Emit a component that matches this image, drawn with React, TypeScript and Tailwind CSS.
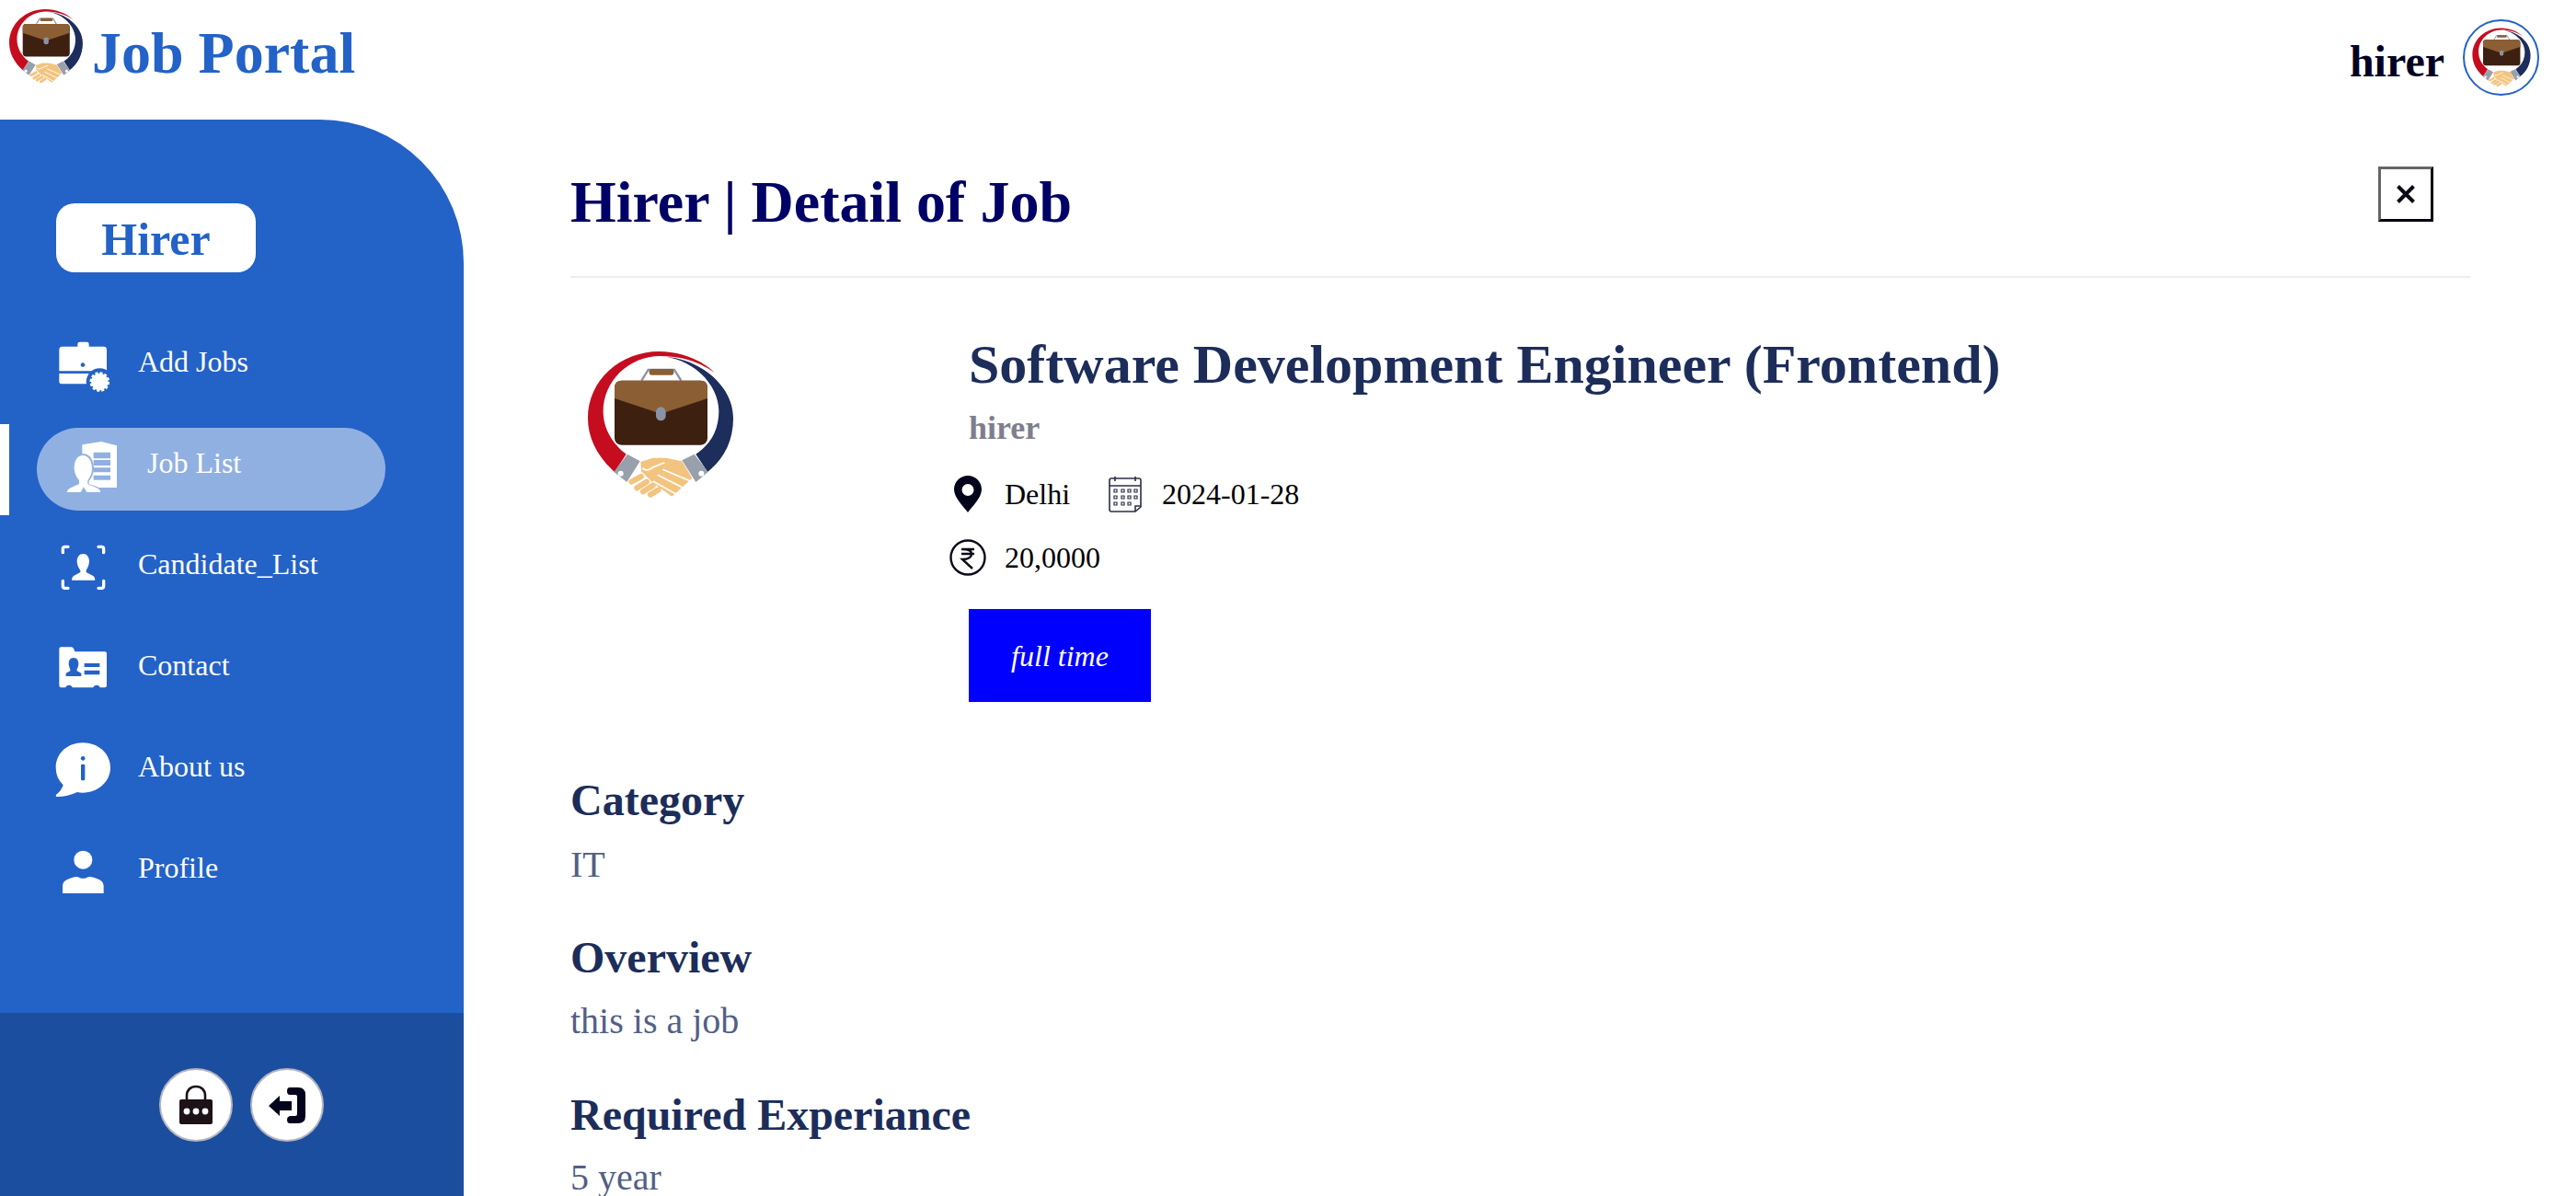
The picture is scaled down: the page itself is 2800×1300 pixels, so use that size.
import React from "react";

function Logo({ className }: { className: string }) {
  return (
    <svg viewBox="100 115 510 510" className={className}>
      <path d="M205 520C150 470 118 410 118 345C118 220 225 127 350 127C420 127 490 155 530 195C480 160 420 142 355 142C250 142 168 225 168 322C168 380 200 430 243 462Z" fill="#c60c1f" />
      <path d="M375 145C470 150 592 230 592 345C592 420 560 480 508 520L470 462C520 430 545 380 545 322C545 240 470 160 375 145Z" fill="#1d2d5c" />
      <path d="M293 222L315 187H400L422 222" fill="none" stroke="#8a93a5" strokeWidth="7" />
      <rect x="318" y="184" width="80" height="20" rx="8" fill="#8b5e34" />
      <rect x="205" y="222" width="303" height="210" rx="22" fill="#3d2010" />
      <path d="M205 280V245Q205 222 228 222H485Q508 222 508 245V280L356 330Z" fill="#8b5e34" />
      <rect x="340" y="308" width="32" height="45" rx="16" fill="#8a93a6" />
      <path d="M203 520L247 462L288 485L245 553Z" fill="#98a0ab" />
      <path d="M425 482L465 462L510 520L470 553Z" fill="#98a0ab" />
      <circle cx="225" cy="525" r="9" fill="#fff" />
      <circle cx="488" cy="525" r="9" fill="#fff" />
      <path d="M290 487L330 474H372L425 485L458 540L392 600L330 555L292 518Z" fill="#f3c47f" />
      <path d="M296 508Q310 520 330 505L368 489M362 512L458 552M345 530L438 576M330 550L412 596" fill="none" stroke="#fff" strokeWidth="5" />
      <path d="M260 552L292 535M278 572L310 552M298 584L330 564M322 594L348 578" fill="none" stroke="#f3c47f" strokeWidth="18" strokeLinecap="round" />
    </svg>
  );
}

function AddJobsIcon() {
  return (
    <svg viewBox="0 0 180 180" className="w-[60px] h-[60px] overflow-visible" fill="#fff">
      <path d="M13 30Q13 20 23 20H73V12Q73 5 80 5H103Q110 5 110 12V20H158Q168 20 168 30V100H13ZM90 73a7 7 0 1 0 .1 0Z" fillRule="evenodd" />
      <path d="M13 108H110V142H20Q13 142 13 135Z" />
      <circle cx="145" cy="135" r="44" fill="#2362c7" />
      <circle cx="145" cy="135" r="28" stroke="#fff" strokeWidth="9" strokeDasharray="9 5.6" />
    </svg>
  );
}

function JobListIcon() {
  return (
    <svg viewBox="0 0 180 180" className="w-[60px] h-[60px] overflow-visible">
      <path d="M58 10L120 0L171 13V150H58ZM95 35V55H150V35ZM95 60V78H150V60ZM95 85V100H150V85ZM95 110V125H150V110Z" fill="#fff" fillRule="evenodd" />
      <path d="M62 40C82 40 96 60 96 88C96 105 88 120 80 128V138L108 148Q122 154 124 172H2Q4 154 18 148L44 138V128Q28 112 26 88C26 60 42 40 62 40Z" fill="#91b0e2" />
      <path d="M60 45C78 45 90 62 90 88C90 103 84 118 76 126V138L104 150Q116 155 118 165H73L63 148L53 165H8Q10 155 22 150L48 138V126Q34 112 32 88C32 62 42 45 60 45Z" fill="#fff" />
    </svg>
  );
}

function CandidateIcon() {
  return (
    <svg viewBox="0 0 180 180" className="w-[60px] h-[60px] overflow-visible">
      <path d="M42 13H32Q25 13 25 20V32M141 13H151Q158 13 158 20V32M25 124V140Q25 148 32 148H42M158 124V140Q158 148 151 148H141" fill="none" stroke="#fff" strokeWidth="10" strokeLinecap="round" />
      <path d="M91 36C103 36 111 46 111 60C111 74 104 84 101 90V96L124 108Q130 112 130 122H54Q54 112 60 108L82 96V90C78 84 71 74 71 60C71 46 79 36 91 36Z" fill="#fff" />
    </svg>
  );
}

function ContactIcon() {
  return (
    <svg viewBox="0 0 180 180" className="w-[60px] h-[60px] overflow-visible">
      <path d="M13 16Q13 10 19 10H52Q60 10 64 25H162Q168 25 168 31V136Q168 142 162 142H146Q144 134 135 134Q126 134 124 142H56Q54 134 45 134Q36 134 34 142H19Q13 142 13 136Z" fill="#fff" />
      <path d="M60 45C71 45 76 54 76 64C76 72 73 78 71 82V88L85 95V105H35V95L49 88V82C47 78 44 72 44 64C44 54 49 45 60 45Z" fill="#2362c7" />
      <path d="M95 63H145V75H95ZM95 86H145V100H95Z" fill="#2362c7" />
    </svg>
  );
}

function AboutIcon() {
  return (
    <svg viewBox="0 0 180 180" className="w-[60px] h-[60px] overflow-visible">
      <path d="M90 -8C139 -8 180 26 180 73C180 120 139 155 90 155Q80 155 72 153Q40 168 8 168Q0 168 3 161Q20 150 26 130Q2 107 2 73C2 26 41 -8 90 -8Z" fill="#fff" />
      <circle cx="90.5" cy="43" r="7" fill="#2362c7" />
      <rect x="84" y="62" width="13" height="53" rx="4" fill="#2362c7" />
    </svg>
  );
}

function ProfileIcon() {
  return (
    <svg viewBox="0 0 180 180" className="w-[60px] h-[60px] overflow-visible" fill="#fff">
      <circle cx="91" cy="44" r="30" />
      <path d="M24 153V128Q24 112 48 104Q68 96 78 101Q91 108 104 101Q114 96 134 104Q158 112 158 128V153Z" />
    </svg>
  );
}

function NavRow({ icon, label }: { icon: React.ReactNode; label: string }) {
  return (
    <div className="flex items-center h-[90px] pl-[60px] gap-[30px]">
      {icon}
      <span className="text-[32px] text-white mb-[14px]">{label}</span>
    </div>
  );
}

export default function App() {
  return (
    <div className="w-[2800px] h-[1300px] overflow-hidden bg-white flex flex-col font-['Liberation_Serif',serif]">
      <header className="h-[130px] shrink-0 flex items-start justify-between">
        <div className="flex items-start pl-[7px] pt-[8px] gap-[7px]">
          <Logo className="w-[86px] h-[86px]" />
          <span className="text-[64px] font-bold text-[#2362c7] leading-none mt-[18px]">Job Portal</span>
        </div>
        <div className="flex items-start gap-[20px] pt-[21px] pr-[40px]">
          <span className="text-[48px] font-bold text-[#000022] leading-none mt-[22px]">hirer</span>
          <div className="w-[83px] h-[83px] rounded-full border-2 border-[#2362c7] flex items-center justify-center">
            <Logo className="w-[68px] h-[68px]" />
          </div>
        </div>
      </header>

      <div className="flex flex-1 min-h-0">
        <aside className="w-[504px] shrink-0 bg-[#2362c7] rounded-tr-[156px] flex flex-col">
          <div className="flex-1 pt-[91px]">
            <div className="ml-[61px] w-[217px] h-[75px] pt-[3px] rounded-[20px] bg-white flex items-center justify-center text-[50px] font-bold text-[#2362c7]">
              Hirer
            </div>
            <nav className="mt-[59px] flex flex-col gap-[20px]">
              <NavRow icon={<AddJobsIcon />} label="Add Jobs" />
              <div className="relative">
                <div className="absolute left-0 top-[-4px] w-[10px] h-[99px] bg-white" />
                <div className="ml-[40px] w-[379px] h-[90px] rounded-[45px] bg-[#91b0e2] flex items-center pl-[30px] gap-[30px]">
                  <JobListIcon />
                  <span className="text-[32px] text-white mb-[14px]">Job List</span>
                </div>
              </div>
              <NavRow icon={<CandidateIcon />} label="Candidate_List" />
              <NavRow icon={<ContactIcon />} label="Contact" />
              <NavRow icon={<AboutIcon />} label="About us" />
              <NavRow icon={<ProfileIcon />} label="Profile" />
            </nav>
          </div>
          <div className="h-[199px] shrink-0 bg-[#1c4e9f] flex items-center justify-center gap-[19px] pl-[21px]">
            <div className="w-[80px] h-[80px] rounded-full bg-white border-2 border-[#b5b5c0] flex items-center justify-center">
              <svg viewBox="0 0 40 44" className="w-[40px] h-[44px]">
                <path d="M10 18V12C10 6 14 2 20 2C26 2 30 6 30 12V18" fill="none" stroke="#1c1218" strokeWidth="2.6" />
                <rect x="2" y="16" width="36" height="27" rx="2" fill="#1c1218" />
                <circle cx="10" cy="29" r="3.4" fill="#fff" />
                <circle cx="20" cy="29" r="3.4" fill="#fff" />
                <circle cx="30" cy="29" r="3.4" fill="#fff" />
              </svg>
            </div>
            <div className="w-[80px] h-[80px] rounded-full bg-white border-2 border-[#b5b5c0] flex items-center justify-center">
              <svg viewBox="0 0 42 40" className="w-[42px] h-[40px]">
                <path d="M1 21L13 10V16H26V26H13V32Z" fill="#04041c" />
                <path d="M24 1H33Q41 1 41 9V32Q41 40 33 40H24Q21 40 21 36Q21 33 24 32H30Q32 32 32 30V11Q32 9 30 9H24Q21 9 21 5Q21 1 24 1Z" fill="#04041c" />
              </svg>
            </div>
          </div>
        </aside>

        <main className="flex-1 min-w-0 pl-[116px] pr-[115px] overflow-hidden">
          <div className="h-[172px] border-b-2 border-[#eeeeee] flex items-start justify-between pt-[51px]">
            <h1 className="text-[64px] font-bold text-[#000066] leading-[78px]">Hirer | Detail of Job</h1>
            <button className="mr-[40px] w-[60px] h-[60px] border-[3px] border-[#000016] border-l-[#666] border-t-[#666] flex items-center justify-center">
              <svg viewBox="0 0 24 24" className="w-[24px] h-[24px]">
                <path d="M3.5 3.5L20.5 20.5M20.5 3.5L3.5 20.5" stroke="#080814" strokeWidth="4" />
              </svg>
            </button>
          </div>

          <div className="flex pt-[58px]">
            <div className="w-[433px] shrink-0 pt-[18px]">
              <Logo className="w-[170px] h-[170px] ml-[13px]" />
            </div>
            <div className="flex flex-col items-start">
              <h2 className="text-[60px] font-bold text-[#1c2d5a] leading-[72px]">Software Development Engineer (Frontend)</h2>
              <p className="text-[36px] font-bold text-[#7e7e8e] leading-[42px] mt-[12px]">hirer</p>
              <div className="flex items-center -ml-[21px] mt-[29px] h-[44px] text-[32px] text-black">
                <span className="w-[40px] flex justify-center">
                  <svg viewBox="0 0 30 40" className="w-[30px] h-[40px]">
                    <path d="M15 0C7 0 0 6.5 0 15C0 24 10 33 15 40C20 33 30 24 30 15C30 6.5 23 0 15 0ZM15 9A6.5 6.5 0 1 1 15 22A6.5 6.5 0 1 1 15 9Z" fill="#02021a" fillRule="evenodd" />
                  </svg>
                </span>
                <span className="ml-[20px] w-[111px]">Delhi</span>
                <span className="w-[40px] flex justify-center">
                  <svg viewBox="0 0 36 40" className="w-[36px] h-[40px]" fill="none" stroke="#2b2e45" strokeWidth="1.6">
                    <path d="M3 3H33Q35 3 35 5V34L29 39H3Q1 39 1 37V5Q1 3 3 3Z" />
                    <path d="M1 11H35M7 1V6M29 1V6M29 39V33H35" />
                    <path d="M6 15h3v3h-3zM14 15h3v3h-3zM21 15h3v3h-3zM28 15h3v3h-3zM6 22h3v3h-3zM14 22h3v3h-3zM21 22h3v3h-3zM28 22h3v3h-3zM6 29h3v3h-3zM14 29h3v3h-3zM21 29h3v3h-3z" strokeWidth="1.2" />
                  </svg>
                </span>
                <span className="ml-[20px]">2024-01-28</span>
              </div>
              <div className="flex items-center -ml-[21px] mt-[25px] h-[44px] text-[32px] text-black">
                <span className="w-[40px] flex justify-center">
                  <svg viewBox="0 0 40 40" className="w-[40px] h-[40px]" fill="none" stroke="#0a0a18">
                    <circle cx="20" cy="20" r="18.5" strokeWidth="2.4" />
                    <path d="M13 11H27M13 16H27M15 11C22 11 24 13 24 16C24 20 20 22 14 22L25 32" strokeWidth="2.4" />
                  </svg>
                </span>
                <span className="ml-[20px]">20,0000</span>
              </div>
              <div className="w-[198px] h-[101px] bg-[#0000ff] mt-[34px] flex items-center justify-center text-[32px] italic text-white">
                full time
              </div>
            </div>
          </div>

          <section className="mt-[79px] flex flex-col text-[#535f85]">
            <h3 className="text-[48px] font-bold text-[#1c2d5a] leading-[56px]">Category</h3>
            <p className="text-[40px] leading-[46px] mt-[19px]">IT</p>
            <h3 className="text-[48px] font-bold text-[#1c2d5a] leading-[56px] mt-[50px]">Overview</h3>
            <p className="text-[40px] leading-[46px] mt-[18px]">this is a job</p>
            <h3 className="text-[48px] font-bold text-[#1c2d5a] leading-[56px] mt-[51px]">Required Experiance</h3>
            <p className="text-[40px] leading-[46px] mt-[17px]">5 year</p>
          </section>
        </main>
      </div>
    </div>
  );
}
